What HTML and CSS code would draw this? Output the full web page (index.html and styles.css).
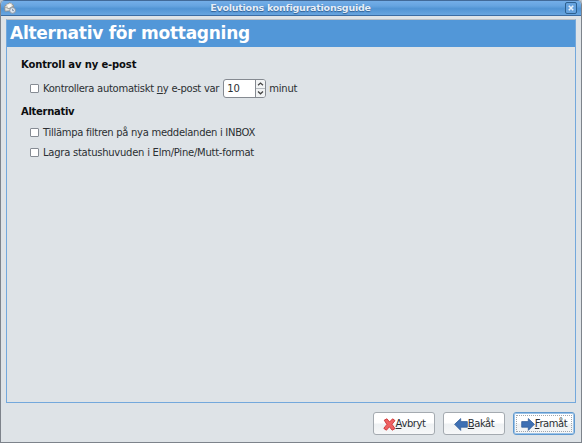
FILE: index.html
```
<!DOCTYPE html>
<html lang="sv">
<head>
<meta charset="utf-8">
<title>Evolutions konfigurationsguide</title>
<link rel="stylesheet" href="styles.css">
</head>
<body>
<div class="window">
  <header class="titlebar">
    <svg class="app-icon" width="12" height="12" viewBox="0 0 12 12">
      <path d="M.7 4.2 5.5.7 9.5 3v5.5L1 9.2z" fill="#e4e4df" stroke="#8b8c8a" stroke-width=".8"/>
      <path d="M2.3 2.5 7.5 1.2 8.5 5 4 6.5z" fill="#fafaf7" stroke="#aaa9a3" stroke-width=".5"/>
      <path d="M1 5l4 1.8L9 4" fill="none" stroke="#8b8c8a" stroke-width=".7"/>
      <circle cx="8.6" cy="8.4" r="2.9" fill="#dce6f1" stroke="#87919d" stroke-width=".9"/>
      <path d="M8.6 6.8v1.8h1.3" fill="none" stroke="#586f8b" stroke-width=".7"/>
    </svg>
    <h1 class="window-title">Evolutions konfigurationsguide</h1>
    <button class="close" aria-label="Stäng"><svg width="6" height="6" viewBox="0 0 6 6"><path d="M.8.8l4.4 4.4M5.2.8L.8 5.2" stroke="#e8f1fa" stroke-width="1.6"/></svg></button>
  </header>
  <main class="panel">
    <h2 class="banner">Alternativ för mottagning</h2>
    <section class="content">
      <h3 class="heading">Kontroll av ny e-post</h3>
      <div class="row row-spin">
        <i class="check"></i><span class="label">Kontrollera automatiskt <u>n</u>y e-post var</span>
        <div class="spin"><span class="value">10</span>
          <div class="steps">
            <svg width="9" height="8" viewBox="0 0 9 8"><path d="M2 5.2 4.5 3 7 5.2" fill="none" stroke="#444" stroke-width="1.3"/></svg>
            <svg width="9" height="8" viewBox="0 0 9 8"><path d="M2 2.6 4.5 4.8 7 2.6" fill="none" stroke="#444" stroke-width="1.3"/></svg>
          </div>
        </div>
        <span class="label unit">minut</span>
      </div>
      <h3 class="heading options">Alternativ</h3>
      <div class="row"><i class="check"></i><span class="label">Tillämpa filtren på nya meddelanden i INBOX</span></div>
      <div class="row"><i class="check"></i><span class="label format">Lagra statushuvuden i Elm/Pine/Mutt-format</span></div>
    </section>
  </main>
  <footer class="actions">
    <button class="btn"><svg width="13" height="13" viewBox="0 0 13 13"><path d="M1.2 2.2 4 .8 6.5 4 9.6.8 12 2.6 9 6.3 12 10.6 9.2 12.2 6.4 8.8 3.4 12.2.8 10.4 3.9 6.4z" fill="#ef6262" stroke="#cc3436" stroke-width=".9" stroke-linejoin="round"/></svg><span><u>A</u>vbryt</span></button>
    <button class="btn"><svg width="14" height="13" viewBox="0 0 14 13"><path d="M.6 6.3 6.7.6v3h6.6v5.6H6.7v3.2z" fill="#3e70b4" stroke="#345f9b" stroke-width=".8" stroke-linejoin="round"/></svg><span><u>B</u>akåt</span></button>
    <button class="btn focused"><svg width="14" height="13" viewBox="0 0 14 13"><path d="M13.4 6.3 7.3.6v3H.7v5.6h6.6v3.2z" fill="#3e70b4" stroke="#345f9b" stroke-width=".8" stroke-linejoin="round"/></svg><span><u>F</u>ramåt</span></button>
  </footer>
</div>
</body>
</html>
```
FILE: styles.css
```
* { box-sizing: border-box; }
body { margin: 0; background: #b9c4ce; font: 10px/14px "DejaVu Sans", sans-serif; color: #2b2f32; }
h1, h2, h3 { margin: 0; font-weight: bold; }
button { margin: 0; padding: 0; font: inherit; color: inherit; }
svg { display: block; flex: none; }
u { text-decoration: underline; text-underline-offset: 1px; text-decoration-thickness: 1px; text-decoration-skip-ink: none; }
.window { width: 582px; height: 443px; display: flex; flex-direction: column; background: #dee3e7; border: 1px solid #7d838b; border-top: 0; border-radius: 5px 5px 0 0; overflow: hidden; }
.titlebar { height: 16px; flex: none; display: flex; align-items: center; padding: 0 4px 0 3px; border-top: 1px solid #426a98; border-bottom: 1px solid #3b6ca3; background: linear-gradient(#74aee8, #66a4e0 35%, #5194d4 55%, #67a5e0); }
.window-title { flex: 1; text-align: center; font-size: 9.5px; letter-spacing: -.23px; line-height: 14px; color: #e6eef7; text-shadow: 0 1px 1px #315f93; }
.close { width: 12px; height: 12px; border: 1px solid #2e608f; border-radius: 2px; background: #65a2de; display: flex; align-items: center; justify-content: center; }
.panel { margin: 3px 5px 0 5px; height: 384px; border: 1px solid #73a8dc; border-top-color: #b8bec4; }
.banner { height: 27px; background: #5297d8; color: #fff; font-size: 17px; letter-spacing: -.26px; line-height: 26px; padding-left: 3px; }
.content { padding: 11px 14px; }
.heading { height: 14px; font-size: 10px; letter-spacing: -.13px; color: #0c0e10; }
.options { letter-spacing: -.3px; margin-bottom: 4px; }
.row { height: 20px; display: flex; align-items: center; padding-left: 9px; }
.row-spin { height: 32px; margin-top: 1px; }
.row-spin .label { padding-bottom: 1px; }
.check { width: 9px; height: 9px; flex: none; border: 1px solid #868c94; background: #fff; border-radius: 1px; margin: -1px 4px 0 0; }
.label { white-space: nowrap; letter-spacing: -.29px; }
.label.unit { letter-spacing: -.2px; }
.label.format { letter-spacing: -.25px; }
.btn span { white-space: nowrap; letter-spacing: -.45px; }
.spin { width: 43px; height: 19px; margin: -1px 3px 0 4px; display: flex; border: 1px solid #858a91; border-radius: 3px; background: #fff; overflow: hidden; }
.value { flex: 1; padding-left: 3px; line-height: 17px; }
.steps { width: 10px; border-left: 1px solid #858a91; background: #f1f3f4; }
.steps svg + svg { border-top: 1px solid #b5babf; height: 9px; }
.actions { display: flex; justify-content: flex-end; gap: 8px; padding: 9px 6px 0 0; }
.btn { width: 62px; height: 23px; display: flex; align-items: center; justify-content: center; gap: 0; padding-top: 1px; border: 1px solid #a4aab0; border-radius: 3px; background: linear-gradient(#fff 45%, #eef1f3 55%, #f7f8f9); }
.focused { border-color: #5f99cf; box-shadow: inset 0 0 0 1px #9cc3e8; outline: 1px dotted #a0a6ac; outline-offset: -4px; }
```
